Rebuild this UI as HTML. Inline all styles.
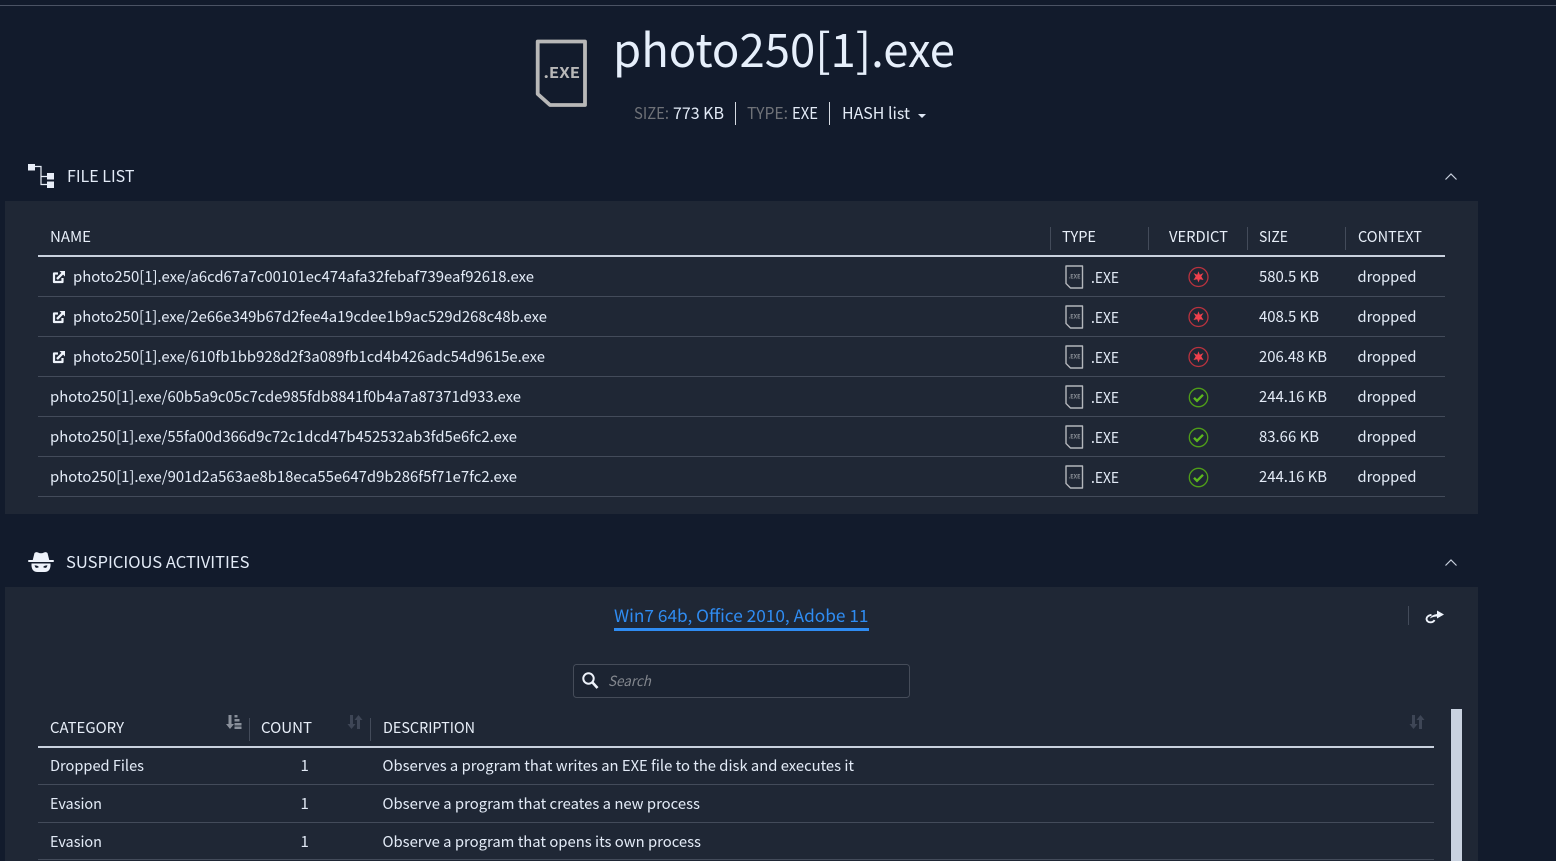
<!DOCTYPE html>
<html><head><meta charset="utf-8"><title>photo250[1].exe</title>
<style>
html,body{margin:0;padding:0;background:#121b2c;width:1556px;height:861px;overflow:hidden}
svg{display:block}
text{font-family:"Noto Sans CJK JP","Liberation Sans",sans-serif;fill:#e3ebf7;font-size:15px;white-space:pre}
.h{font-size:15px;fill:#e8eff9}
.s{font-size:16px}
.t{font-size:6px;font-weight:700;fill:#8b9097}
</style></head><body>
<svg width="1556" height="861" viewBox="0 0 1556 861" xmlns="http://www.w3.org/2000/svg">
<defs>
<g id="f"><path d="M1 1H17.500V23H5.500L1 18.500Z" fill="none" stroke="#b4b7bc" stroke-width="1.400" stroke-linejoin="round"/><text class="t" x="3.500" y="13.500" textLength="12" lengthAdjust="spacingAndGlyphs">.EXE</text></g>
<g id="bad"><circle cx="0" cy="0" r="9.500" fill="none" stroke="#b9323e" stroke-width="1.300"/><path d="M0-5.800L1.300-2.300 5-4 2.800-.5 5 3 1.300 2.300 0 5.500-1.300 2.300-5 3-2.800-.5-5-4-1.300-2.300Z" fill="#f0404c"/></g>
<g id="ok"><circle cx="0" cy="0" r="9.200" fill="none" stroke="#4f9e18" stroke-width="1.300"/><path d="M-4.500 0.300L-1.500 3.300 4.500-2.700" fill="none" stroke="#5cb81e" stroke-width="2.400"/></g>
<g id="ext"><path d="M5.500 2.500H1.500V11H10V7" fill="none" stroke="#eef3fb" stroke-width="2.200" stroke-linejoin="round"/><path d="M4.500 8L10 2.500" stroke="#eef3fb" stroke-width="2.400"/><path d="M7 0H12.500V5.500Z" fill="#eef3fb"/></g>
<g id="sort" fill="#3e4656"><path d="M2 0h3v9h2.500L3.500 14-.5 9H2Z"/><path d="M9 14h3V5h2.500L10.500 0 6.500 5H9Z"/></g>
</defs>
<rect x="0" y="5" width="1556" height="1" fill="#4b5364"/>
<rect x="5" y="201" width="1473" height="313" fill="#1f2735"/>
<rect x="5" y="587" width="1473" height="274" fill="#1f2735"/>

<path d="M537.700 41.500H585V105H550L537.700 94Z" fill="none" stroke="#b8b8b8" stroke-width="3.800" stroke-linejoin="round"/>
<text x="543.500" y="78" textLength="36.500" lengthAdjust="spacingAndGlyphs" style="font-size:15px;font-weight:700;fill:#b8b8b8">.EXE</text>
<text x="613" y="67" textLength="342" lengthAdjust="spacingAndGlyphs" style="font-size:46px;font-weight:400;fill:#e6effb">photo250[1].exe</text>
<text x="634" y="119" textLength="35" lengthAdjust="spacingAndGlyphs" class="s" style="fill:#6f7278">SIZE:</text>
<text x="673" y="119" textLength="51" lengthAdjust="spacingAndGlyphs" class="s">773 KB</text>
<rect x="735" y="102" width="1" height="23" fill="#d5dae2"/>
<text x="747" y="119" textLength="41" lengthAdjust="spacingAndGlyphs" class="s" style="fill:#6f7278">TYPE:</text>
<text x="792" y="119" textLength="26" lengthAdjust="spacingAndGlyphs" class="s">EXE</text>
<rect x="829" y="102" width="1" height="23" fill="#d5dae2"/>
<text x="842" y="119" textLength="68" lengthAdjust="spacingAndGlyphs" class="s">HASH list</text>
<path d="M918 114h8l-4 4Z" fill="#dfe8f5"/>

<g fill="#e8eef8"><rect x="28" y="164" width="7" height="6.500"/><rect x="47" y="173" width="7" height="6.500"/><rect x="47" y="181.500" width="7" height="6.500"/></g>
<path d="M35 166.500H41V184.500H47M41 176.500H47" fill="none" stroke="#e8eef8" stroke-width="1.200"/>
<text x="67" y="182" textLength="67.500" lengthAdjust="spacingAndGlyphs" class="s">FILE LIST</text>
<path d="M1445.500 179.500L1451 174 1456.500 179.500" fill="none" stroke="#c9d1de" stroke-width="1.200"/>

<text class="h" x="50" y="242" textLength="41" lengthAdjust="spacingAndGlyphs">NAME</text>
<text class="h" x="1062" y="242" textLength="34" lengthAdjust="spacingAndGlyphs">TYPE</text>
<text class="h" x="1169" y="242" textLength="59" lengthAdjust="spacingAndGlyphs">VERDICT</text>
<text class="h" x="1259" y="242" textLength="29" lengthAdjust="spacingAndGlyphs">SIZE</text>
<text class="h" x="1358" y="242" textLength="64" lengthAdjust="spacingAndGlyphs">CONTEXT</text>
<g fill="#434b5a"><rect x="1050" y="227" width="1" height="23"/><rect x="1148" y="227" width="1" height="23"/><rect x="1247" y="227" width="1" height="23"/><rect x="1345" y="227" width="1" height="23"/></g>
<rect x="38" y="255" width="1407" height="2" fill="#c9d1de"/>
<g fill="#434b5a"><rect x="38" y="296" width="1407" height="1"/><rect x="38" y="336" width="1407" height="1"/><rect x="38" y="376" width="1407" height="1"/><rect x="38" y="416" width="1407" height="1"/><rect x="38" y="456" width="1407" height="1"/><rect x="38" y="496" width="1407" height="1"/></g>

<use href="#ext" x="52.500" y="271"/><use href="#ext" x="52.500" y="311"/><use href="#ext" x="52.500" y="351"/>
<text x="73" y="282" textLength="461" lengthAdjust="spacingAndGlyphs">photo250[1].exe/a6cd67a7c00101ec474afa32febaf739eaf92618.exe</text>
<text x="73" y="322" textLength="474" lengthAdjust="spacingAndGlyphs">photo250[1].exe/2e66e349b67d2fee4a19cdee1b9ac529d268c48b.exe</text>
<text x="73" y="362" textLength="472" lengthAdjust="spacingAndGlyphs">photo250[1].exe/610fb1bb928d2f3a089fb1cd4b426adc54d9615e.exe</text>
<text x="50" y="402" textLength="471" lengthAdjust="spacingAndGlyphs">photo250[1].exe/60b5a9c05c7cde985fdb8841f0b4a7a87371d933.exe</text>
<text x="50" y="442" textLength="467" lengthAdjust="spacingAndGlyphs">photo250[1].exe/55fa00d366d9c72c1dcd47b452532ab3fd5e6fc2.exe</text>
<text x="50" y="482" textLength="467" lengthAdjust="spacingAndGlyphs">photo250[1].exe/901d2a563ae8b18eca55e647d9b286f5f71e7fc2.exe</text>

<use href="#f" x="1065" y="265"/><use href="#f" x="1065" y="305"/><use href="#f" x="1065" y="345"/><use href="#f" x="1065" y="385"/><use href="#f" x="1065" y="425"/><use href="#f" x="1065" y="465"/>
<text x="1091" y="283" textLength="28" lengthAdjust="spacingAndGlyphs">.EXE</text>
<text x="1091" y="323" textLength="28" lengthAdjust="spacingAndGlyphs">.EXE</text>
<text x="1091" y="363" textLength="28" lengthAdjust="spacingAndGlyphs">.EXE</text>
<text x="1091" y="403" textLength="28" lengthAdjust="spacingAndGlyphs">.EXE</text>
<text x="1091" y="443" textLength="28" lengthAdjust="spacingAndGlyphs">.EXE</text>
<text x="1091" y="483" textLength="28" lengthAdjust="spacingAndGlyphs">.EXE</text>
<use href="#bad" x="1198.500" y="277"/><use href="#bad" x="1198.500" y="317"/><use href="#bad" x="1198.500" y="357"/>
<use href="#ok" x="1198.500" y="397.500"/><use href="#ok" x="1198.500" y="437.500"/><use href="#ok" x="1198.500" y="477.500"/>
<text x="1259" y="282" textLength="60" lengthAdjust="spacingAndGlyphs">580.5 KB</text>
<text x="1259" y="322" textLength="60" lengthAdjust="spacingAndGlyphs">408.5 KB</text>
<text x="1259" y="362" textLength="68" lengthAdjust="spacingAndGlyphs">206.48 KB</text>
<text x="1259" y="402" textLength="68" lengthAdjust="spacingAndGlyphs">244.16 KB</text>
<text x="1259" y="442" textLength="60" lengthAdjust="spacingAndGlyphs">83.66 KB</text>
<text x="1259" y="482" textLength="68" lengthAdjust="spacingAndGlyphs">244.16 KB</text>
<text x="1357.500" y="282" textLength="59" lengthAdjust="spacingAndGlyphs">dropped</text>
<text x="1357.500" y="322" textLength="59" lengthAdjust="spacingAndGlyphs">dropped</text>
<text x="1357.500" y="362" textLength="59" lengthAdjust="spacingAndGlyphs">dropped</text>
<text x="1357.500" y="402" textLength="59" lengthAdjust="spacingAndGlyphs">dropped</text>
<text x="1357.500" y="442" textLength="59" lengthAdjust="spacingAndGlyphs">dropped</text>
<text x="1357.500" y="482" textLength="59" lengthAdjust="spacingAndGlyphs">dropped</text>

<path d="M32.500 561L34.500 553Q36 551.500 38 552.500 41 554 44 552.500 46 551.500 47.500 553L49.500 561Z" fill="#eef3fb"/>
<rect x="28" y="560" width="26" height="2" rx="1" fill="#eef3fb"/>
<path d="M31.500 563.500H50.500Q51 572 44.500 572H37.500Q31 572 31.500 563.500Z" fill="#eef3fb"/>
<path d="M34.500 565.500Q37 565 39 567 37 568.500 35.500 567.500ZM47.500 565.500Q45 565 43 567 45 568.500 46.500 567.500Z" fill="#121b2c"/>
<text x="66" y="568" textLength="183.500" lengthAdjust="spacingAndGlyphs" class="s">SUSPICIOUS ACTIVITIES</text>
<path d="M1445.500 565.500L1451 560 1456.500 565.500" fill="none" stroke="#c9d1de" stroke-width="1.200"/>

<text x="614" y="622" textLength="254.500" lengthAdjust="spacingAndGlyphs" style="font-size:17px;fill:#2f8cf2">Win7 64b, Office 2010, Adobe 11</text>
<rect x="614" y="628" width="255" height="3" fill="#2f8cf2"/>
<rect x="1408" y="606" width="1" height="19" fill="#434b5a"/>
<path d="M1431.500 614.800Q1426.500 615.800 1426.500 619 1427 622.300 1430.500 622.300 1433.500 622.300 1434.500 620" fill="none" stroke="#eef3fb" stroke-width="1.900"/>
<path d="M1430 618.500Q1431 615 1437 614V610.500L1444 614.500 1437 618.500V616.500Q1433 616.500 1430 618.500Z" fill="#eef3fb"/>

<rect x="573.500" y="664.500" width="336" height="33" rx="3" fill="#1c2432" stroke="#454c59"/>
<circle cx="588.500" cy="678.500" r="5.200" fill="none" stroke="#eef3fb" stroke-width="2"/>
<path d="M592.500 682.500L597.500 688" stroke="#eef3fb" stroke-width="2.600"/>
<text x="608" y="686" textLength="43" lengthAdjust="spacingAndGlyphs" style="font-style:italic;fill:#83878e;font-size:14px">Search</text>

<text class="h" x="50" y="733" textLength="74" lengthAdjust="spacingAndGlyphs">CATEGORY</text>
<text class="h" x="261" y="733" textLength="51" lengthAdjust="spacingAndGlyphs">COUNT</text>
<text class="h" x="383" y="733" textLength="92" lengthAdjust="spacingAndGlyphs">DESCRIPTION</text>
<path d="M228.500 715h3v9h2.500l-4 5-4-5h2.500ZM234.500 715h3v2.500h-3ZM234.500 719h5v2.500h-5ZM234.500 723h7v2.500h-7ZM234.500 726.500h7v2.500h-7Z" fill="#8a909b"/>
<use href="#sort" x="348" y="715"/><use href="#sort" x="1410" y="715"/>
<g fill="#434b5a"><rect x="249" y="718" width="1" height="23"/><rect x="370" y="718" width="1" height="23"/></g>
<rect x="38" y="746" width="1396" height="2" fill="#c9d1de"/>
<g fill="#434b5a"><rect x="38" y="784" width="1396" height="1"/><rect x="38" y="822" width="1396" height="1"/><rect x="38" y="859" width="1396" height="1"/></g>
<text x="50" y="771" textLength="94" lengthAdjust="spacingAndGlyphs">Dropped Files</text>
<text x="50" y="809" textLength="52" lengthAdjust="spacingAndGlyphs">Evasion</text>
<text x="50" y="847" textLength="52" lengthAdjust="spacingAndGlyphs">Evasion</text>
<text x="300.500" y="771">1</text><text x="300.500" y="809">1</text><text x="300.500" y="847">1</text>
<text x="382.500" y="771" textLength="471.500" lengthAdjust="spacingAndGlyphs">Observes a program that writes an EXE file to the disk and executes it</text>
<text x="382.500" y="809" textLength="317.500" lengthAdjust="spacingAndGlyphs">Observe a program that creates a new process</text>
<text x="382.500" y="847" textLength="318.500" lengthAdjust="spacingAndGlyphs">Observe a program that opens its own process</text>
<rect x="1451" y="709" width="11" height="152" fill="#c9d2e0"/>
</svg>
</body></html>
